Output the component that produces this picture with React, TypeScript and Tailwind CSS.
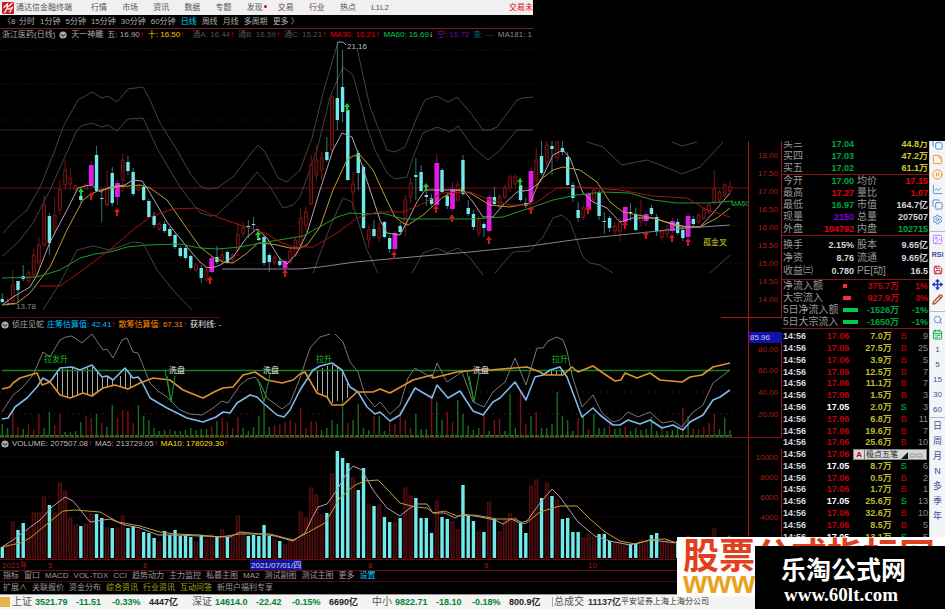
import {
  CalendarRange,
  Copy,
  Image,
  LineChart,
  Move,
  PauseCircle,
  Pencil,
  Save,
  Search,
  Settings,
  StickyNote,
} from "lucide-react";

type Candle = [string, number, number, number, number, number];

// kind (u = up, d = down, m = signal), high, low, body top, body bottom, volume top
const candles: Candle[] = [
  ["d", 293, 303, 299, 302, 547], ["u", 299, 306, 301, 305, 545], ["u", 270, 302, 285, 300, 522],
  ["d", 281, 303, 281, 290, 530], ["d", 265, 281, 276, 279, 523], ["u", 270, 283, 273, 281, 530],
  ["u", 248, 278, 255, 275, 513], ["u", 237, 268, 245, 262, 513], ["u", 195, 247, 205, 245, 497],
  ["d", 213, 255, 216, 243, 505], ["u", 197, 235, 215, 230, 513], ["u", 180, 215, 190, 210, 483],
  ["u", 160, 190, 170, 185, 491], ["u", 168, 190, 178, 184, 518], ["u", 185, 191, 186, 189, 525],
  ["d", 188, 203, 196, 200, 526], ["u", 183, 190, 185, 189, 524], ["m", 161, 187, 165, 185, 514],
  ["d", 146, 192, 155, 191, 514], ["d", 190, 222, 198, 199, 518], ["u", 170, 207, 187, 205, 528],
  ["d", 167, 206, 173, 203, 528], ["m", 180, 205, 183, 197, 528], ["u", 154, 192, 160, 180, 516],
  ["d", 156, 175, 162, 171, 528], ["d", 168, 196, 172, 194, 526], ["u", 185, 191, 186, 190, 530],
  ["d", 184, 201, 187, 200, 532], ["d", 199, 218, 201, 217, 533], ["d", 212, 228, 216, 225, 538],
  ["u", 222, 231, 224, 229, 542], ["d", 221, 233, 224, 231, 531], ["d", 227, 237, 229, 236, 535],
  ["d", 233, 249, 235, 247, 530], ["d", 246, 258, 248, 256, 536], ["d", 245, 260, 248, 258, 536],
  ["d", 254, 270, 256, 268, 537], ["u", 263, 272, 265, 270, 542], ["d", 265, 283, 268, 278, 535],
  ["u", 268, 281, 270, 280, 540], ["m", 256, 273, 258, 272, 535], ["d", 246, 264, 257, 262, 537],
  ["u", 248, 262, 255, 260, 530], ["d", 250, 264, 252, 262, 537], ["u", 253, 263, 255, 260, 537],
  ["u", 222, 256, 235, 250, 516], ["u", 222, 237, 228, 233, 532], ["d", 220, 238, 226, 227, 536],
  ["d", 217, 232, 224, 225, 535], ["d", 229, 241, 238, 240, 536], ["d", 235, 266, 237, 263, 525],
  ["d", 253, 272, 255, 262, 536], ["u", 255, 265, 257, 263, 540], ["d", 257, 267, 261, 265, 541],
  ["m", 259, 270, 261, 268, 545], ["u", 249, 264, 251, 262, 540], ["u", 238, 257, 240, 255, 540],
  ["u", 208, 250, 218, 245, 512], ["u", 206, 232, 212, 225, 518], ["u", 155, 205, 165, 204, 488],
  ["u", 145, 180, 160, 175, 495], ["u", 152, 180, 158, 170, 515], ["d", 137, 162, 152, 160, 513],
  ["u", 95, 152, 97, 150, 474], ["d", 42, 130, 98, 120, 451], ["d", 50, 122, 87, 112, 458],
  ["d", 104, 181, 110, 180, 463], ["u", 172, 210, 184, 192, 478], ["d", 150, 190, 153, 173, 490],
  ["d", 165, 229, 167, 228, 468], ["u", 225, 248, 230, 240, 505], ["d", 220, 238, 229, 236, 506],
  ["u", 222, 242, 228, 238, 505], ["d", 221, 238, 222, 237, 517], ["d", 235, 253, 238, 249, 522],
  ["m", 231, 251, 233, 249, 523], ["d", 222, 234, 226, 232, 518], ["u", 195, 236, 200, 225, 488],
  ["u", 178, 203, 183, 197, 496], ["d", 158, 200, 175, 177, 498], ["d", 165, 192, 172, 191, 518],
  ["d", 188, 206, 195, 197, 518], ["d", 194, 206, 198, 204, 533], ["m", 155, 206, 163, 205, 501],
  ["d", 168, 193, 170, 192, 517], ["d", 192, 209, 196, 206, 519], ["m", 182, 211, 189, 209, 522],
  ["u", 181, 202, 185, 200, 530], ["d", 155, 196, 160, 194, 485], ["d", 200, 216, 208, 214, 516],
  ["d", 210, 230, 214, 227, 521], ["u", 216, 237, 220, 233, 532], ["d", 222, 237, 224, 228, 532],
  ["m", 195, 232, 197, 231, 502], ["d", 187, 206, 197, 204, 519], ["u", 194, 209, 197, 207, 532],
  ["u", 185, 199, 188, 197, 520], ["u", 174, 192, 177, 188, 514], ["u", 174, 187, 177, 184, 518],
  ["d", 178, 202, 185, 200, 523], ["d", 198, 208, 203, 206, 533], ["m", 167, 204, 171, 202, 486],
  ["u", 148, 186, 160, 180, 480], ["d", 141, 175, 156, 173, 498], ["u", 138, 166, 145, 162, 483],
  ["d", 138, 175, 146, 149, 496], ["u", 138, 162, 142, 158, 500], ["d", 141, 155, 148, 152, 519],
  ["d", 152, 186, 157, 185, 518], ["d", 182, 202, 185, 198, 532], ["d", 202, 222, 210, 218, 532],
  ["u", 205, 220, 208, 217, 538], ["m", 192, 212, 194, 210, 535], ["u", 188, 202, 190, 200, 537],
  ["d", 190, 220, 193, 216, 534], ["d", 212, 234, 221, 222, 534], ["d", 216, 232, 218, 228, 541],
  ["u", 222, 235, 226, 231, 543], ["u", 218, 241, 223, 231, 542], ["m", 206, 223, 207, 222, 543],
  ["d", 203, 221, 212, 213, 544], ["d", 208, 231, 214, 230, 544], ["u", 200, 226, 216, 221, 540],
  ["m", 211, 226, 214, 221, 542], ["d", 205, 216, 208, 214, 535], ["d", 214, 236, 217, 231, 533],
  ["u", 228, 241, 231, 237, 543], ["u", 225, 238, 229, 234, 540], ["m", 218, 233, 221, 231, 543],
  ["d", 219, 235, 222, 233, 541], ["d", 227, 241, 230, 238, 542], ["m", 214, 240, 216, 237, 536],
  ["d", 216, 228, 219, 224, 541], ["u", 213, 224, 215, 222, 543], ["u", 208, 220, 210, 218, 540],
  ["u", 203, 214, 205, 212, 541], ["u", 170, 205, 189, 202, 529], ["u", 190, 204, 192, 200, 538],
  ["u", 183, 197, 185, 195, 540], ["u", 181, 193, 187, 191, 536],
];

const barX = (i: number) => 2.3 + i * 5.235;

const bands = [
  "3,233 13,222 27,210 40,187 55,150 63,127 78,100 92,92 102,98 108,96 117,102 128,89 143,87 150,100 160,123 177,150 190,173 200,186 208,189 217,188 233,177 252,152 258,145 265,152 278,178 287,182 300,170 312,138 323,93 338,42",
  "357,48 370,107 387,150 395,152 405,147 417,117 425,100 430,98 437,96 448,102 457,97 470,112 483,130 490,130 497,127 517,100 522,98 533,97",
  "3,256 20,240 33,223 50,190 68,150 76,132 81,126 92,123 102,127 108,125 117,131 128,119 143,118 150,133 158,150 180,187 200,213 210,216 217,215 240,193 257,172 270,187 283,208 293,205 300,197 317,150 330,97 343,67 353,75 367,127 375,150 387,173 395,179 407,177 413,157 423,133 437,127 450,132 458,126 473,147 488,160 500,150 517,130 533,130",
  "587,142 603,147 610,154 622,165 647,160 663,166 682,174 700,167 723,142",
  "672,142 682,146 697,142",
  "43,310 60,283 77,250 93,246 110,250 133,242 143,243 157,270 173,290 192,310",
  "313,273 330,227 343,198 352,202 367,250 378,273",
  "412,273 423,253 437,248 447,253 458,248 470,258 483,275",
  "495,273 513,252 530,251 543,237 553,218 562,215 570,222 583,257 590,263 600,265 613,273",
  "710,273 730,255",
];

const averages = [
  {
    color: "#b9a0a8",
    points:
      "2,305 13,297 30,287 37,275 50,242 67,210 78,188 85,186 92,185 100,192 110,187 125,185 133,180 142,181 147,188 167,222 187,247 200,262 206,267 212,268 220,265 233,257 247,237 257,229 267,238 275,251 280,259 287,264 297,253 307,233 320,190 333,150 342,133 352,137 358,153 370,190 380,220 387,233 400,235 408,220 417,202 425,190 443,190 463,190 473,202 483,217 493,217 503,205 517,192 530,190 540,182 553,155 563,150 570,158 583,193 593,202 607,208 620,222 633,218 653,218 670,223 687,227 700,227 713,213 730,193",
  },
  {
    color: "#b5a02c",
    points:
      "2,305 17,303 30,293 50,267 67,230 83,200 91,194 100,190 117,187 140,185 150,188 167,200 183,223 200,247 213,257 223,262 233,263 247,253 258,243 270,244 277,245 290,248 300,248 307,245 320,227 333,190 347,160 353,156 360,155 373,170 383,192 395,217 403,223 408,225 423,215 443,197 457,190 470,193 490,205 510,207 530,203 540,180 553,170 563,167 580,170 597,182 610,202 623,212 653,218 680,227 700,227 717,218 730,208",
  },
  {
    color: "#1d9c2a",
    points:
      "2,278 37,277 60,270 80,258 95,254 110,252 127,247 147,245 180,244 200,248 217,249 240,247 267,242 303,236 323,225 337,217 350,213 370,214 383,213 403,219 470,219 503,217 530,208 553,200 577,195 603,192 630,193 653,200 677,203 707,203 733,201",
  },
  {
    color: "#a51218",
    points:
      "40,286 60,286 87,267 113,247 133,230 150,217 173,209 197,208 217,217 240,225 267,234 280,242 293,247 313,247 337,233 357,218 377,212 403,212 420,205 443,193 470,192 490,200 510,205 530,205 537,202 557,188 577,187 620,190 653,196 687,198 707,210 730,217",
  },
  {
    color: "#858590",
    points: "222,269 300,269 320,267 355,262 400,258 470,252 530,246 580,239 620,235 687,228 730,225",
  },
];

const buyArrows = [
  [91, 196], [117, 212], [210, 280], [285, 273], [394, 255], [436, 209], [452, 218], [489, 240],
  [531, 210], [588, 210], [625, 225], [646, 235], [672, 238], [688, 242],
];

const sellArrows = [[81, 192], [258, 235], [347, 107], [426, 187], [520, 182]];

const priceTicks = ["18.00", "17.50", "17.00", "16.50", "16.00", "15.50", "15.00", "14.50", "14.00"];

const chipLine =
  "2,419 8,418 15,407 27,398 37,387 43,378 50,382 60,368 72,367 80,370 92,365 102,377 107,376 113,380 125,368 133,378 138,377 142,382 150,398 167,408 187,418 203,422 216,417 223,412 230,413 237,403 250,395 257,397 263,403 277,415 284,417 290,410 300,390 313,370 320,366 332,363 342,370 350,387 358,392 367,407 375,414 380,412 390,421 400,415 415,388 432,398 437,385 448,398 460,391 473,411 483,415 493,402 500,398 515,382 526,400 535,377 543,375 550,370 560,367 567,377 582,417 593,408 600,415 613,425 620,425 628,420 640,424 650,420 662,428 673,425 683,430 690,422 703,415 713,400 720,397 730,390";

const profitLines = [
  "2,412 13,395 22,388 33,375 43,352 50,357 60,340 66,337 72,336 82,343 92,334 103,350 107,349 113,358 122,340 127,338 133,352 138,353 150,383 158,391 167,397 180,410 190,414 202,415 213,408 222,401 228,403 240,385 248,379 255,377 260,383 267,398 282,409 290,403 300,378 310,348 320,337 330,334",
  "335,334 343,342 350,362 358,372 365,395 375,407 380,402 390,414 400,405 408,378 415,368 432,378 437,363 447,382 462,372 473,402 484,407 493,392 505,382 515,358 526,385 537,348 543,348 548,341 557,337 563,340 567,351 572,375 582,407 593,395 602,413 613,422 620,420 628,412 638,417 650,412 662,423 673,421 682,427 692,413 703,405 713,383 730,370",
];

const retailLine =
  "2,389 10,387 13,383 20,378 37,373 42,385 50,382 60,395 70,398 83,393 92,396 103,388 115,385 128,389 140,383 153,378 170,380 183,390 203,398 216,391 223,388 233,387 243,375 255,372 267,380 282,383 293,380 300,374 305,372 317,393 327,397 332,405 343,405 357,392 373,392 380,389 390,393 413,380 432,375 433,378 457,372 477,370 490,370 527,367 540,372 545,375 563,375 572,367 578,372 593,366 603,373 615,381 621,380 625,373 637,378 650,373 660,380 682,382 690,377 702,375 713,367 730,363";

// positive = green, negative = red
const momentum = [
  12, 8, -24, -9, 7, -12, -6, -22, 8, 24, -11, -22, 4, 4, 5, 14, -20, -18, 22, -13,
  9, 31, -18, -26, -25, -13, 31, 20, 16, 8, 5, 6, -7, 5, 5, 6, 8, 6, 7, 7,
  -10, 15, -18, -14, -8, -19, 8, 5, 9, 20, 32, 9, -11, -12, -14, -16, -13, -28, -8, -15,
  -14, 6, 8, 16, 12, 36, -13, 16, 32, 8, 6, -20, 20, 5, -14, -12, -26, -16, -8, 22,
  7, 7, -42, 34, 16, -24, -14, 36, 22, 10, 6, 8, -22, 5, -16, -17, 5, 42, 8, -44,
  -12, 20, -24, 8, 8, 12, 44, 20, 16, 5, -18, 20, -7, 22, 8, 8, -12, 7, 8, -9,
  5, 8, 6, 7, 19, 5, -8, 5, 6, 9, -28, 20, -8, -7, -9, -13, -22, 7, 18, 6,
];

const hatchBars = [
  [57, 373, 391], [62, 369, 395], [67, 369, 397], [72, 368, 397], [77, 370, 396], [82, 370, 394],
  [87, 368, 395], [92, 367, 395], [97, 371, 392], [102, 378, 389], [107, 377, 387], [112, 380, 386],
  [120, 376, 386], [125, 369, 388], [130, 375, 388], [317, 370, 391], [322, 368, 395],
  [327, 366, 398], [332, 365, 403], [337, 367, 401], [342, 371, 400], [347, 380, 398],
  [551, 371, 375], [556, 370, 375], [561, 370, 375],
];

const menuItems = ["行情", "市场", "资讯", "数据", "专题", "发现", "交易", "行业", "热点", "L1L2"];

const periods = [
  "分时", "1分钟", "5分钟", "15分钟", "30分钟", "60分钟", "日线", "周线", "月线", "多周期", "更多 〉",
];

const indicatorTabs = [
  "指标", "窗口", "MACD", "VOL-TDX", "CCI", "趋势动力", "主力监控", "私募主图", "MA2", "测试副图",
  "测试主图", "更多",
];

const bids = [
  ["买三", "17.04", "44.8万"],
  ["买四", "17.03", "47.2万"],
  ["买五", "17.02", "61.1万"],
];

const quotes = [
  ["今开", "17.00", "text-green-600", "均价", "17.15", "text-red-600"],
  ["最高", "17.27", "text-red-600", "量比", "1.07", "text-red-600"],
  ["最低", "16.97", "text-green-600", "市值", "164.7亿", "text-gray-300"],
  ["现量", "2150", "text-purple-700", "总量", "207507", "text-gray-300"],
  ["外盘", "104792", "text-red-600", "内盘", "102715", "text-green-600"],
];

const fundamentals = [
  ["换手", "2.15%", "股本", "9.65亿"],
  ["净资", "8.76", "流通", "9.65亿"],
  ["收益㈢", "0.780", "PE[动]", "16.5"],
];

const flows = [
  { label: "净流入额", amount: "375.7万", pct: "1%", bar: "w-1 bg-red-500", tone: "text-red-700" },
  { label: "大宗流入", amount: "927.9万", pct: "3%", bar: "w-2 bg-red-500", tone: "text-red-700" },
  { label: "5日净流入额", amount: "-1526万", pct: "-1%", bar: "w-[15px] bg-green-500", tone: "text-green-600" },
  { label: "5日大宗流入", amount: "-1650万", pct: "-1%", bar: "w-[15px] bg-green-500", tone: "text-green-600" },
];

const trades = [
  ["17.06", "7.0万", "B", "9"],
  ["17.06", "27.5万", "B", "25"],
  ["17.06", "3.9万", "B", "5"],
  ["17.06", "12.5万", "B", "7"],
  ["17.06", "11.1万", "B", "7"],
  ["17.06", "1.5万", "B", "3"],
  ["17.05", "2.0万", "S", "3"],
  ["17.06", "6.8万", "B", "11"],
  ["17.06", "19.6万", "B", "7"],
  ["17.06", "25.6万", "B", "10"],
  ["17.06"],
  ["17.05", "8.7万", "S", "6"],
  ["17.06", "0.5万", "B", "2"],
  ["17.06", "1.7万", "B", "1"],
  ["17.05", "25.6万", "S", "13"],
  ["17.06", "32.6万", "B", "10"],
  ["17.06", "8.5万", "B", "5"],
  ["17.05", "13.1万", "S", "5"],
];

const indices = [
  ["上证", "3521.79", "-11.51", "-0.33%", "4447亿"],
  ["深证", "14614.0", "-22.42", "-0.15%", "6690亿"],
  ["中小", "9822.71", "-18.10", "-0.18%", "800.9亿"],
];

function MenuBar() {
  return (
    <header className="flex h-[15px] w-[533px] items-center bg-[#f1efef] text-[#555]">
      <svg viewBox="0 0 12 12" className="ml-[2px] mr-[2px] size-3">
        <rect width="12" height="12" rx="1" fill="#c9202a" />
        <path d="M1.5 5.5 5.5 2 5 5.5 10.5 1M2.5 11 5 6.5 6.5 7 10.5 5.5 7.5 10.5" stroke="#fff" strokeWidth="1.2" fill="none" />
      </svg>
      <h1 className="w-[75px]">通达信金融终端</h1>
      <nav className="flex w-[298px] justify-between">
        {menuItems.map((item) => (
          <a key={item} href="#" className="relative">
            {item}
            {item === "发现" && (
              <span className="absolute -right-1 top-0.5 size-[3px] rounded-full bg-red-600" />
            )}
          </a>
        ))}
      </nav>
      <a href="#" className="ml-auto text-red-600">
        交易未
      </a>
    </header>
  );
}

function PeriodBar() {
  return (
    <div className="flex h-[13px] items-center gap-[5px] pl-[3px] text-[#aaa]">
      <button className="w-[11px] text-left">〈8</button>
      {periods.map((item) => (
        <button key={item} className={item === "日线" ? "text-cyan-400" : ""}>
          {item}
        </button>
      ))}
    </div>
  );
}

function Dot() {
  return (
    <svg viewBox="0 0 8 8" className="size-2 shrink-0">
      <circle cx="4" cy="4" r="3.6" fill="#aaa" />
      <path d="M2 3.2 4 5.4 6 3.2" stroke="#111" fill="none" />
    </svg>
  );
}

function Up() {
  return <span className="font-bold text-red-600">↑</span>;
}

function PriceChart() {
  return (
    <svg viewBox="0 40 782 278" className="block w-full" fontSize="8">
      <g stroke="#2a0608" strokeDasharray="2 1">
        {[50, 84, 120, 155, 226, 263, 298].map((y) => (
          <line key={y} x1="0" x2="748" y1={y} y2={y} />
        ))}
      </g>
      <rect x="220" y="274" width="501" height="44" fill="#000" />
      <line x1="0" x2="748" y1="130" y2="130" stroke="#3b1640" />
      <line x1="0" x2="748" y1="188" y2="188" stroke="#7a0d12" />
      <g fill="none" stroke="#434343" strokeLinejoin="round">
        {bands.map((points) => (
          <polyline key={points} points={points} />
        ))}
      </g>
      {candles.map(([kind, high, low, top, bottom], i) => {
        const x = barX(i);
        if (kind === "u") {
          return (
            <g key={i} stroke="#84191a" fill="#1c0303" strokeWidth="0.9">
              <line x1={x} x2={x} y1={high} y2={low} />
              <rect x={x - 1.4} y={top} width="2.8" height={bottom - top} />
            </g>
          );
        }
        return (
          <g key={i} fill={kind === "m" ? "#e01be0" : "#6fe9ea"}>
            <rect x={x - 0.5} y={high} width="1" height={low - high} opacity="0.5" />
            <rect x={x - (kind === "m" ? 2.4 : 1.7)} y={top} width={kind === "m" ? 4.8 : 3.4} height={bottom - top} />
          </g>
        );
      })}
      <g fill="none" strokeLinejoin="round">
        {averages.map(({ color, points }) => (
          <polyline key={color} points={points} stroke={color} />
        ))}
      </g>
      {buyArrows.map(([x, y]) => (
        <path key={x} d={`M${x} ${y - 4}l3 4h-2v4h-2v-4h-2z`} fill="#d3161b" />
      ))}
      {sellArrows.map(([x, y]) => (
        <path key={x} d={`M${x} ${y - 4}l3 4h-2v4h-2v-4h-2z`} fill="#22c52c" />
      ))}
      <path d="M338 42h5l3 3M7 304h8" stroke="#999" fill="none" />
      <text x="347" y="49" fill="#bbb">21.16</text>
      <text x="16" y="309" fill="#888">13.78</text>
      <text x="703" y="245" fill="#d8d820">孤金叉</text>
      <text x="731" y="206" fill="#1fc42a" fontSize="7">MA60</text>
      <g stroke="#b3101a">
        <line x1="748.5" x2="748.5" y1="141" y2="318" />
        <line x1="781.5" x2="781.5" y1="141" y2="318" />
        <line x1="0" x2="220" y1="317.5" y2="317.5" stroke="#5c0a10" />
        <line x1="721" x2="782" y1="317.5" y2="317.5" />
      </g>
      <g fill="#a92018">
        {priceTicks.map((label, i) => (
          <text key={label} x="758" y={158 + i * 18}>
            {label}
          </text>
        ))}
      </g>
    </svg>
  );
}

function ChipChart() {
  return (
    <svg viewBox="0 332 782 106" className="block w-full" fontSize="8">
      <g stroke="#4a0c0e" strokeDasharray="2 4">
        <line x1="0" x2="735" y1="348" y2="348" stroke="#220405" />
        <line x1="0" x2="735" y1="392" y2="392" />
        <line x1="0" x2="735" y1="414" y2="414" />
      </g>
      {momentum.map((value, i) => (
        <line
          key={i}
          x1={barX(i)}
          x2={barX(i)}
          y1={436 - Math.abs(value)}
          y2="436"
          stroke={value > 0 ? "#176e22" : "#7d1018"}
          strokeWidth="1.4"
        />
      ))}
      {hatchBars.map(([x, top, bottom]) => (
        <line key={x} x1={x + 0.5} x2={x + 0.5} y1={top} y2={bottom} stroke="#aaa" />
      ))}
      <line x1="2" x2="730" y1="370.5" y2="370.5" stroke="#158420" strokeWidth="1.4" />
      <line x1="0" x2="732" y1="436" y2="436" stroke="#147a1e" strokeWidth="2" strokeDasharray="4 1" />
      <g fill="none" strokeLinejoin="round">
        {profitLines.map((points) => (
          <polyline key={points} points={points} stroke="#777" />
        ))}
        <polyline points={chipLine} stroke="#7fb8ea" strokeWidth="1.6" />
        <polyline points={retailLine} stroke="#e09030" strokeWidth="1.6" />
        <path
          d="M165 370 171 402 175 376M167 376l4 26M258 379 264 402 270 374M467 372 474 402 479 374M469 376l5 26"
          stroke="#1f9a2a"
        />
      </g>
      <g fill="#17c322">
        <text x="44" y="362">拉发升</text>
        <text x="316" y="362">拉升</text>
        <text x="552" y="362">拉升</text>
      </g>
      <g fill="#e8e8e8">
        <text x="169" y="373">洗盘</text>
        <text x="263" y="373">洗盘</text>
        <text x="473" y="373">洗盘</text>
      </g>
      <g stroke="#b3101a">
        <line x1="748.5" x2="748.5" y1="332" y2="438" />
        <line x1="781.5" x2="781.5" y1="332" y2="438" />
        <line x1="0" x2="782" y1="437.5" y2="437.5" stroke="#7a0d12" />
      </g>
      <rect x="749" y="332" width="33" height="11" fill="#1212a8" />
      <text x="750" y="340" fill="#c8c8ff">85.96</text>
      <g fill="#a92018">
        <text x="758" y="352">80.00</text>
        <text x="758" y="373">60.00</text>
        <text x="758" y="395">40.00</text>
        <text x="758" y="417">20.00</text>
      </g>
    </svg>
  );
}

function VolumeChart() {
  return (
    <svg viewBox="0 449 782 122" className="block w-full" fontSize="8">
      <g stroke="#2a0608" strokeDasharray="2 1">
        {[457, 477, 497, 517, 538].map((y) => (
          <line key={y} x1="0" x2="748" y1={y} y2={y} />
        ))}
      </g>
      {candles.map(([kind, , , , , top], i) =>
        kind === "d" ? (
          <rect key={i} x={barX(i) - 1.7} y={top} width="3.4" height={558 - top} fill="#6fe9ea" />
        ) : (
          <rect
            key={i}
            x={barX(i) - 1.5}
            y={top}
            width="3"
            height={558 - top}
            fill="#2e0506"
            stroke="#5c1113"
          />
        ),
      )}
      <g fill="none" strokeLinejoin="round">
        <polyline
          stroke="#b99aa0"
          points="2,547 13,540 25,531 40,520 52,507 65,497 73,501 90,522 110,519 125,525 140,528 158,535 175,535 200,536 230,537 240,532 260,534 275,536 293,541 305,533 312,518 318,507 327,504 337,490 345,476 353,466 362,470 373,490 387,508 400,516 410,508 417,504 427,504 433,513 445,513 455,518 463,514 480,517 495,520 503,524 511,519 520,523 527,521 540,503 552,489 560,497 578,522 595,536 610,541 630,545 650,540 677,543"
        />
        <polyline
          stroke="#b9a238"
          points="2,547 20,543 30,538 47,524 63,511 75,510 100,512 118,522 140,526 160,532 175,534 200,535 220,537 240,534 270,534 293,540 305,534 325,523 340,498 355,485 365,481 378,480 388,490 400,503 415,507 427,508 433,513 445,511 457,516 475,515 497,519 515,519 525,524 540,512 560,506 577,506 590,519 605,532 620,541 635,544 650,540 665,539 677,543 700,541 730,537"
        />
      </g>
      <g stroke="#b3101a">
        <line x1="748.5" x2="748.5" y1="449" y2="560" />
        <line x1="781.5" x2="781.5" y1="449" y2="560" />
        <line x1="0" x2="748" y1="559.5" y2="559.5" stroke="#6a0c10" />
        <line x1="0" x2="782" y1="570.5" y2="570.5" stroke="#6a0c10" />
      </g>
      <g fill="#a92018" textAnchor="end">
        <text x="778" y="460">10000</text>
        <text x="778" y="480">8000</text>
        <text x="778" y="500">6000</text>
        <text x="778" y="520">4000</text>
      </g>
      <rect x="250" y="560" width="52" height="10" fill="#14149a" />
      <text x="251" y="568" fill="#d0d0ff">2021/07/01/四</text>
      <g fill="#a31a1a">
        <text x="2" y="568">2021年</text>
        <text x="48" y="568">5</text>
        <text x="143" y="568">6</text>
        <text x="368" y="568">8</text>
        <text x="484" y="568">9</text>
        <text x="588" y="568">10</text>
      </g>
    </svg>
  );
}

function Charts() {
  return (
    <main className="min-w-0 flex-1">
      <PeriodBar />
      <div className="flex h-3 items-center gap-1 whitespace-nowrap border-t border-red-900 pl-[2px] text-[#aaa]">
        <span>浙江医药(日线)</span>
        <Dot />
        <span>天一神雕</span>
        <span>五: 16.90<Up /></span>
        <span className="text-yellow-400">十: 16.50<Up /></span>
        <span className="ml-1 text-[#555]">通A: 16.44<Up /></span>
        <span className="text-[#555]">通B: 16.59<Up /></span>
        <span className="text-[#555]">通C: 15.21<Up /></span>
        <span className="text-red-600">MA30: 16.21<Up /></span>
        <span className="text-green-500">MA60: 16.69<span className="text-white">↓</span></span>
        <span className="text-purple-800">空: 16.72</span>
        <span className="text-cyan-800">查: —</span>
        <span className="text-[#888]">MA181: 1</span>
      </div>
      <PriceChart />
      <div className="mr-[33px] flex h-[14px] items-center gap-[3px] border-r border-[#b3101a] pl-[1px] text-[#aaa]">
        <Dot />
        <span>侦庄见蛇</span>
        <span className="text-sky-400">庄筹估算值: 42.41<Up /></span>
        <span className="text-orange-400">散筹估算值: 67.31<Up /></span>
        <span className="text-gray-200">获利线: -</span>
      </div>
      <ChipChart />
      <div className="mr-[33px] flex h-[11px] items-center gap-[3px] border-r border-[#b3101a] pl-[1px] text-[#bbb]">
        <Dot />
        <span>VOLUME: 207507.08<Up /></span>
        <span>MA5: 213729.05<Up /></span>
        <span className="text-yellow-300">MA10: 178029.30<Up /></span>
      </div>
      <VolumeChart />
      <div className="flex h-[11px] items-center gap-[5px] border-b border-[#4c080c] pl-[3px] text-[#999]">
        {indicatorTabs.map((item) => (
          <button key={item}>{item}</button>
        ))}
        <button className="text-cyan-400">设置</button>
      </div>
      <div className="flex h-3 items-center gap-[5px] pl-[3px] text-[#999]">
        <button>扩展∧</button>
        <button>关联报价</button>
        <button>资金分布</button>
        <button className="text-[#a3a81c]">综合资讯</button>
        <button className="text-[#a3a81c]">行业资讯</button>
        <button className="text-[#a3a81c]">互动问答</button>
        <button>新用户福利专享</button>
      </div>
    </main>
  );
}

function InputMethodBar() {
  return (
    <div className="mr-[2px] flex h-[11px] items-center gap-[2px] border border-[#888] bg-[#d6d6d6] px-[2px] text-[8px] leading-[9px] text-[#222]">
      <b className="text-red-700">A</b>
      <span className="whitespace-nowrap border-l border-[#777] pl-[1px]">极点五笔</span>
      <svg viewBox="0 0 24 8" className="h-2 min-w-0 flex-1">
        <path d="M1 8 8 1v7z" fill="#111" />
        <path d="M10 3h5v3h-5zM17 3h5v3h-5z" fill="none" stroke="#999" />
      </svg>
    </div>
  );
}

function QuotePanel() {
  return (
    <aside className="w-[147px] shrink-0 pt-[123px] text-[10px] leading-3 text-[#999]">
      <section className="border-b border-red-900 px-[1px]">
        {bids.map(([label, price, amount]) => (
          <div key={label} className="flex h-[12px] items-center">
            <span className="w-8">{label}</span>
            <b className="w-[39px] text-right text-[9px] text-green-600">{price}</b>
            <b className="flex-1 text-right text-[9px] text-[#d0c82a]">{amount}</b>
          </div>
        ))}
      </section>
      <section className="border-b border-red-900 px-[1px]">
        {quotes.map(([label, value, tone, label2, value2, tone2]) => (
          <div key={label} className="flex h-[12px] items-center">
            <span className="w-8">{label}</span>
            <b className={`w-[39px] text-right text-[9px] ${tone}`}>{value}</b>
            <span className="pl-[3px]">{label2}</span>
            <b className={`flex-1 text-right text-[9px] ${tone2}`}>{value2}</b>
          </div>
        ))}
      </section>
      <section className="border-b border-red-900 px-[1px] py-[2px]">
        {fundamentals.map(([label, value, label2, value2]) => (
          <div key={label} className="flex h-[13px] items-center text-gray-300">
            <span className="w-8 text-[#999]">{label}</span>
            <b className="w-[39px] text-right text-[9px]">{value}</b>
            <span className="pl-[3px] text-[#999]">{label2}</span>
            <b className="flex-1 text-right text-[9px]">{value2}</b>
          </div>
        ))}
      </section>
      <section className="border-b border-red-900 px-[1px]">
        {flows.map(({ label, amount, pct, bar, tone }) => (
          <div key={label} className="flex h-[12px] items-center">
            <span className="w-[60px] whitespace-nowrap">{label}</span>
            <span className="w-4">
              <span className={`block h-1 ${bar}`} />
            </span>
            <b className={`w-10 text-right text-[9px] ${tone}`}>{amount}</b>
            <b className={`flex-1 text-right text-[9px] ${tone}`}>{pct}</b>
          </div>
        ))}
      </section>
      <table className="mt-[2px] h-[212px] w-full text-[9px] leading-[11px]">
        <tbody>
          {trades.map(([price, amount, side, count], i) => (
            <tr key={i} className="text-right">
              <td className="pl-[1px] text-left font-bold text-gray-300">14:56</td>
              <td className={price === "17.05" ? "font-bold text-white" : "font-bold text-red-700"}>
                {price}
              </td>
              {amount ? (
                <>
                  <td className="w-10 font-bold text-[#c0b92a]">{amount}</td>
                  <td className={side === "S" ? "w-[14px] text-green-500" : "w-[14px] text-red-700"}>
                    {side}
                  </td>
                  <td className="w-[21px] pr-[1px] text-[#888]">{count}</td>
                </>
              ) : (
                <td colSpan={3} className="pl-1">
                  <InputMethodBar />
                </td>
              )}
            </tr>
          ))}
        </tbody>
      </table>
    </aside>
  );
}

function ToolBar() {
  const tools = [Copy, StickyNote, PauseCircle, LineChart, Copy, Settings];
  const intervals = ["1", "5", "15", "30", "60"];
  const spans = ["日", "周", "月", "N", "多", "季", "年"];

  return (
    <aside className="flex w-4 shrink-0 flex-col border-l border-[#c8ccd4] bg-[#f2f4f8] pt-[122px] text-[8px] text-[#3c4f96]">
      {tools.map((Icon, i) => (
        <button key={i} aria-label="工具" className="grid h-[15px] place-items-center">
          <Icon size={11} className={i === 1 || i === 2 ? "text-orange-400" : "text-[#4d86c8]"} />
        </button>
      ))}
      <div className="mt-1 flex flex-col border-t border-[#b5bac4]">
        <button aria-label="图片" className="grid h-[15px] place-items-center text-purple-400">
          <Image size={11} />
        </button>
        <button className="h-[15px] text-[7px] font-bold">RSI</button>
        <button aria-label="保存" className="grid h-[15px] place-items-center text-red-700">
          <Save size={10} />
        </button>
        <button aria-label="移动" className="grid h-[15px] place-items-center text-blue-800">
          <Move size={11} strokeWidth={3} />
        </button>
        <button aria-label="画线" className="grid h-[15px] place-items-center text-[#b8553c]">
          <Pencil size={11} strokeWidth={3} />
        </button>
      </div>
      <div className="mt-1 flex flex-col border-t border-[#b5bac4]">
        <button aria-label="查找" className="grid h-[15px] place-items-center text-[#4d86c8]">
          <Search size={10} />
        </button>
        <button aria-label="周期" className="grid h-[15px] place-items-center text-green-600">
          <CalendarRange size={11} />
        </button>
        {intervals.map((item) => (
          <button key={item} className="h-[15px]">
            {item}
          </button>
        ))}
      </div>
      <div className="flex flex-col border-t border-[#b5bac4] text-[9px]">
        {spans.map((item) => (
          <button key={item} className="h-[15px]">
            {item}
          </button>
        ))}
      </div>
    </aside>
  );
}

function StatusBar() {
  return (
    <footer className="flex h-[15px] items-center whitespace-nowrap border-t border-[#999] bg-[#f4f4f2] text-[9px] font-bold text-[#333]">
      <span className="mr-[2px] size-[10px] bg-[#e8b54c]" />
      {indices.map(([name, value, change, pct, turnover]) => (
        <div key={name} className="flex w-[180px] items-center text-green-700">
          <span className="w-[23px] text-[10px] font-normal text-[#555]">{name}</span>
          <span className="w-[41px]">{value}</span>
          <span className="w-[36px]">{change}</span>
          <span className="w-[37px]">{pct}</span>
          <span className="text-[#222]">{turnover}</span>
        </div>
      ))}
      <span className="border-l border-[#aaa] pl-[1px] text-[10px] font-normal text-[#555]">总成交</span>
      <span className="ml-1">11137亿</span>
      <span className="text-[8px] font-normal">平安证券上海上海分公司</span>
    </footer>
  );
}

export default function App() {
  return (
    <div className="relative flex min-h-screen flex-col overflow-hidden bg-black font-['Liberation_Sans','Noto_Sans_CJK_SC',sans-serif] text-[8px] leading-[10px]">
      <MenuBar />
      <div className="flex">
        <Charts />
        <QuotePanel />
        <ToolBar />
      </div>
      <StatusBar />

      <div className="absolute right-0 top-0 h-[141px] w-[412px] bg-black" />
      <div className="absolute bottom-[13px] right-0 h-[59px] w-[268px] overflow-hidden whitespace-nowrap bg-white pl-[6px] pt-[2px]">
        <p className="text-[36px] font-bold leading-[35px] text-[#e2401c]">股票公式指标网</p>
        <p className="text-[31px] font-bold leading-[18px] text-[#e9a21f]">www.gpgszb.com</p>
      </div>
      <div className="absolute bottom-0 right-0 flex h-[63px] w-[190px] flex-col bg-black pl-[26px] pt-3 font-['Liberation_Serif','Noto_Sans_CJK_SC',serif] font-bold text-white">
        <p className="text-[25px] leading-[26px]">乐淘公式网</p>
        <a href="#" className="pl-[3px] text-[19px] leading-[22px]">
          www.60lt.com
        </a>
      </div>
    </div>
  );
}
